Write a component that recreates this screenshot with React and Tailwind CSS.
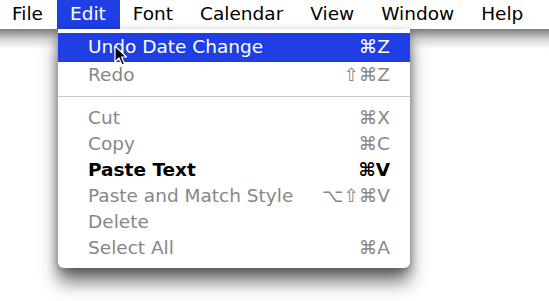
import React from 'react'

const menuItems = ['File', 'Edit', 'Font', 'Calendar', 'View', 'Window', 'Help']

const rows = [
  { label: 'Undo Date Change', keys: '⌘Z', active: true },
  { label: 'Redo', keys: '⇧⌘Z' },
  { sep: true },
  { label: 'Cut', keys: '⌘X' },
  { label: 'Copy', keys: '⌘C' },
  { label: 'Paste Text', keys: '⌘V', bold: true },
  { label: 'Paste and Match Style', keys: '⌥⇧⌘V' },
  { label: 'Delete', keys: '' },
  { label: 'Select All', keys: '⌘A' },
]

const Cursor = () => (
  <svg width="14" height="22" viewBox="0 0 14 22" className="absolute left-[114px] top-[45px]">
    <path d="M1 1 L1 17 L5 13 L8 20 L10.5 19 L7.5 12 L12.5 12 Z" fill="#000" stroke="#fff" strokeWidth="1.2" strokeLinejoin="round" />
  </svg>
)

const App = () => {
  return (
    <div className="relative w-[549px] h-[301px] overflow-hidden bg-white font-['DejaVu_Sans',sans-serif] text-[18.5px]">
      <div className="flex h-[29px] items-center bg-white text-black">
        {menuItems.map((m, i) => (
          <div
            key={m}
            className={
              (i === 0 ? 'pl-[12px] ' : 'pl-[13px] ') +
              'pr-[14px] h-full flex items-center leading-none ' +
              (m === 'Edit' ? 'bg-[#1f3fe4] text-white' : '')
            }
          >
            {m}
          </div>
        ))}
      </div>
      <div className="h-[20px] bg-gradient-to-b from-[#7e7e7e] via-[#d4d4d4] to-white" />

      <div className="absolute left-[58px] top-[29px] w-[352px] bg-white rounded-b-[6px] pt-[4px] pb-[7px] shadow-[0_14px_18px_rgba(0,0,0,0.55),0_3px_10px_rgba(0,0,0,0.3)]">
        {rows.map((r, i) =>
          r.sep ? (
            <div key={i} className="h-[17px] flex items-center">
              <div className="w-full h-px bg-[#c9c9c9]" />
            </div>
          ) : (
            <div
              key={i}
              className={
                'flex items-center justify-between h-[26px] pl-[30px] pr-[20px] leading-none ' +
                (r.active ? 'bg-[#1f3fe4] text-white h-[29px]' : r.bold ? 'text-black font-bold' : 'text-[#878787]')
              }
            >
              <span>{r.label}</span>
              <span>{r.keys}</span>
            </div>
          )
        )}
      </div>
      <Cursor />
    </div>
  )
}

export default App
